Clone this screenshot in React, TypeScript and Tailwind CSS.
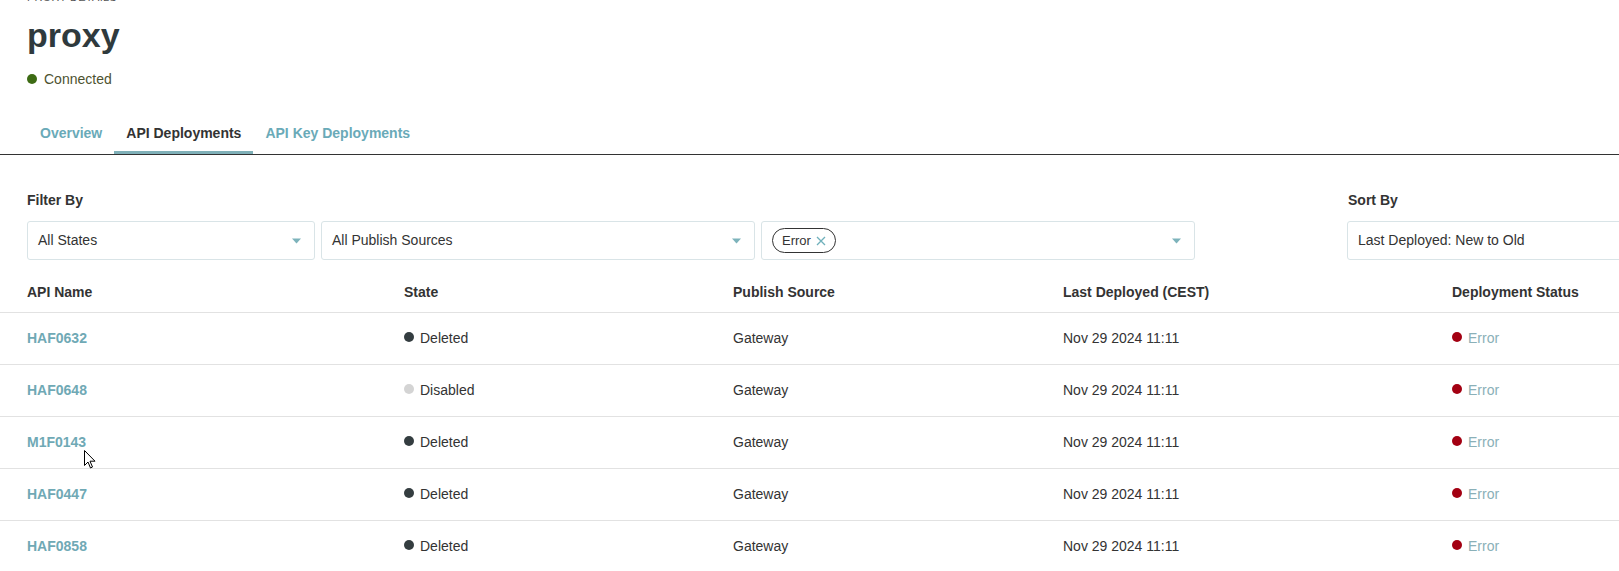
import React from "react";

const rows = [
  { name: "HAF0632", state: "Deleted" },
  { name: "HAF0648", state: "Disabled" },
  { name: "M1F0143", state: "Deleted" },
  { name: "HAF0447", state: "Deleted" },
  { name: "HAF0858", state: "Deleted" },
];

function Caret() {
  return (
    <svg width="9" height="6" viewBox="0 0 9 6" className="shrink-0">
      <path d="M0 0.5 L9 0.5 L4.5 5.5 Z" fill="#7db3bb" />
    </svg>
  );
}

function Select({ width, children, caret = true }: { width: string; children: React.ReactNode; caret?: boolean }) {
  return (
    <div
      className={`${width} h-[39px] shrink-0 flex items-center justify-between border border-[#d9e4e7] rounded-[3px] pl-[10px] pr-[13px] text-[14px] text-[#333]`}
    >
      <div className="flex items-center">{children}</div>
      {caret && <Caret />}
    </div>
  );
}

function Dot({ color }: { color: string }) {
  return <span className={`inline-block w-[10px] h-[10px] rounded-full ${color} mr-[6px] -mt-[3px]`} />;
}

export default function App() {
  return (
    <div
      className="relative w-[1619px] h-[571px] overflow-hidden bg-white text-[#333]"
      style={{ fontFamily: '"Liberation Sans", Arial, sans-serif' }}
    >
      {/* header */}
      <div className="pl-[27px]">
        <div className="-mt-[10px] h-[14px] text-[11px] leading-[14px] tracking-wide uppercase text-[#555]">
          Proxy Details
        </div>
        <h1 className="mt-[11px] text-[34px] leading-[40px] font-bold text-[#2f3a3d]">proxy</h1>
        <div className="mt-[14px] flex items-center text-[14px] leading-[20px] text-[#4d5230]">
          <span className="inline-block w-[10px] h-[10px] rounded-full bg-[#3d6b14] mr-[7px]" />
          Connected
        </div>
      </div>

      {/* tabs */}
      <div className="mt-[23px] border-b border-[#333] flex pl-[28px] text-[14px] font-bold">
        <div className="h-[42px] px-[12px] flex items-center text-[#6aaab8]">Overview</div>
        <div className="h-[42px] px-[12px] flex items-center text-[#333] border-b-[3px] border-[#7fb0b8] pt-[3px]">
          API Deployments
        </div>
        <div className="h-[42px] px-[12px] flex items-center text-[#6aaab8]">API Key Deployments</div>
      </div>

      {/* filters */}
      <div className="mt-[35px] flex pl-[27px]">
        <div>
          <div className="text-[14px] leading-[20px] font-bold text-[#333]">Filter By</div>
          <div className="mt-[11px] flex gap-[6px]">
            <Select width="w-[288px]">All States</Select>
            <Select width="w-[434px]">All Publish Sources</Select>
            <Select width="w-[434px]">
              <span className="flex items-center h-[25px] rounded-full border border-[#333] px-[9px] text-[13px] text-[#333]">
                Error
                <svg width="10" height="10" viewBox="0 0 10 10" className="ml-[5px]">
                  <path d="M1 1 L9 9 M9 1 L1 9" stroke="#6fb0bb" strokeWidth="1.3" />
                </svg>
              </span>
            </Select>
          </div>
        </div>
        <div className="ml-[152px]">
          <div className="text-[14px] leading-[20px] font-bold text-[#333] pl-[1px]">Sort By</div>
          <div className="mt-[11px] flex">
            <Select width="w-[400px]" caret={false}>
              Last Deployed: New to Old
            </Select>
          </div>
        </div>
      </div>

      {/* table */}
      <div className="mt-[12px]">
        <div className="h-[41px] border-b border-[#e2e2e2] grid grid-cols-[377px_329px_330px_389px_1fr] items-center pl-[27px] text-[14px] font-bold text-[#333]">
          <div>API Name</div>
          <div>State</div>
          <div>Publish Source</div>
          <div>Last Deployed (CEST)</div>
          <div>Deployment Status</div>
        </div>
        {rows.map((r) => (
          <div
            key={r.name}
            className="h-[52px] border-b border-[#e2e2e2] grid grid-cols-[377px_329px_330px_389px_1fr] items-center pl-[27px] text-[14px] text-[#333]"
          >
            <div className="text-[14px] font-bold text-[#6fa9b5]">{r.name}</div>
            <div className="flex items-center">
              <Dot color={r.state === "Deleted" ? "bg-[#343d40]" : "bg-[#d4d4d4]"} />
              {r.state}
            </div>
            <div>Gateway</div>
            <div>Nov 29 2024 11:11</div>
            <div className="flex items-center text-[#8ab0b8]">
              <Dot color="bg-[#a30012]" />
              Error
            </div>
          </div>
        ))}
      </div>

      {/* mouse cursor */}
      <svg width="12" height="19" viewBox="0 0 12 19" className="absolute left-[84px] top-[450px]">
        <path
          d="M0.5 0.5 L0.5 15.5 L4 12 L6.5 18 L8.5 17 L6 11.2 L11 11.2 Z"
          fill="#fff"
          stroke="#000"
          strokeWidth="1"
          strokeLinejoin="round"
        />
      </svg>
    </div>
  );
}
